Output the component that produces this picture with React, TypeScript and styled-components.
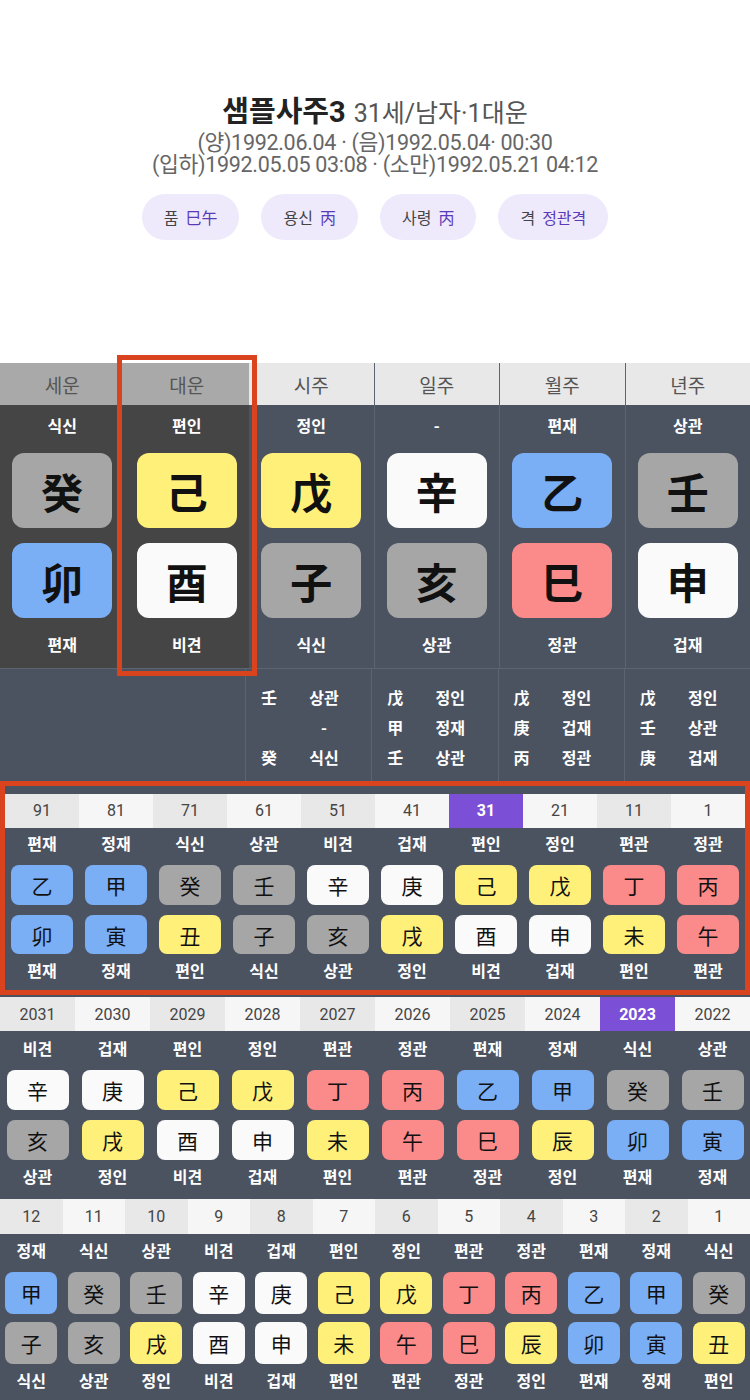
import React from "react";
import styled, { createGlobalStyle } from "styled-components";

const Global = createGlobalStyle`
  body { margin: 0; background: #fff; font-family: Roboto, "Noto Sans CJK KR", sans-serif; }
`;

const COLORS: Record<string, string> = {
  甲: "#7aaef5", 乙: "#7aaef5", 寅: "#7aaef5", 卯: "#7aaef5",
  丙: "#fb8a8a", 丁: "#fb8a8a", 巳: "#fb8a8a", 午: "#fb8a8a",
  戊: "#fff07a", 己: "#fff07a", 辰: "#fff07a", 戌: "#fff07a", 丑: "#fff07a", 未: "#fff07a",
  庚: "#fafafa", 辛: "#fafafa", 申: "#fafafa", 酉: "#fafafa",
  壬: "#a6a6a6", 癸: "#a6a6a6", 亥: "#a6a6a6", 子: "#a6a6a6",
};

const Header = styled.div`
  padding-top: 94px; height: 363px; box-sizing: border-box;
  display: flex; flex-direction: column; align-items: center;
`;
const Title = styled.div`
  display: flex; align-items: baseline; gap: 8px; color: #222; line-height: 36px;
`;
const Name = styled.span`font-size: 29px; font-weight: 700;`;
const Sub = styled.span`font-size: 25px; color: #555;`;
const Line = styled.div`font-size: 21.5px; color: #666; line-height: 22px; letter-spacing: -0.3px;`;
const Pills = styled.div`display: flex; gap: 22px; margin-top: 18px;`;
const Pill = styled.div`
  height: 46px; padding: 0 22px; border-radius: 23px; background: #eeeafc;
  display: flex; align-items: center; gap: 7px; font-size: 16px; color: #444;
  font-family: "Noto Sans CJK KR", sans-serif;
`;
const PillVal = styled.span`color: #5a3ab8;`;

const Table = styled.div`display: flex; background: #4b5361;`;
const Col = styled.div<{ $dark?: boolean; $boxed?: boolean; $div?: boolean }>`
  flex: 1; display: flex; flex-direction: column; align-items: center;
  background: ${(p) => (p.$dark ? "#454545" : "#4b5361")};
  border-left: ${(p) => (p.$div ? "1px solid #5c6472" : "none")};
  position: relative; z-index: ${(p) => (p.$boxed ? 2 : 1)};
  outline: ${(p) => (p.$boxed ? "5px solid #d9441f" : "none")};
  outline-offset: ${(p) => (p.$boxed ? "3px" : "0")};
  height: 305px;
`;
const ColHead = styled.div<{ $dark?: boolean }>`
  align-self: stretch; height: 42px; display: flex; align-items: center; justify-content: center;
  background: ${(p) => (p.$dark ? "#a9a9a9" : "#e8e8e8")};
  color: #555; font-size: 19px; font-family: "Noto Sans CJK KR", sans-serif;
`;
const Label = styled.div<{ $h?: number; $pb?: number }>`
  color: #fff; font-weight: 700; font-size: 16px;
  height: ${(p) => p.$h ?? 42}px; padding-bottom: ${(p) => p.$pb ?? 0}px; box-sizing: border-box;
  display: flex; align-items: center; justify-content: center;
  font-family: "Noto Sans CJK KR", sans-serif;
`;
const BigCard = styled.div<{ $bg: string }>`
  width: 100px; height: 75px; border-radius: 12px; background: ${(p) => p.$bg};
  display: flex; align-items: center; justify-content: center; margin-bottom: 15px;
  font-size: 42px; font-weight: 700; color: #111; font-family: "Noto Sans CJK KR", sans-serif;
`;
const Hidden = styled.div`
  display: grid; grid-template-columns: 245px repeat(4, 1fr); background: #4b5361;
  height: 112px; border-top: 1px solid #5c6472;
`;
const HCol = styled.div`
  border-left: 1px solid #5c6472; display: flex; flex-direction: column; justify-content: center;
  padding-top: 4px;
  &:first-child { border-left: none; }
`;
const HRow = styled.div`
  display: grid; grid-template-columns: 46px 64px; height: 30px; align-items: center;
  color: #fff; font-weight: 700; font-size: 16px; font-family: "Noto Sans CJK KR", sans-serif;
  text-align: center;
`;

const Section = styled.div<{ $boxed?: boolean; $h: number; $pt: number }>`
  background: #4b5361; height: ${(p) => p.$h}px; box-sizing: border-box;
  border: ${(p) => (p.$boxed ? "5px solid #d9441f" : "none")};
  padding-top: ${(p) => p.$pt}px;
  display: flex;
`;
const SCol = styled.div`flex: 1; display: flex; flex-direction: column; align-items: center;`;
const Num = styled.div<{ $alt: boolean; $active: boolean; $h: number }>`
  align-self: stretch; height: ${(p) => p.$h}px; display: flex; align-items: center; justify-content: center;
  background: ${(p) => (p.$active ? "#7b4fd6" : p.$alt ? "#e8e8e8" : "#f6f6f6")};
  color: ${(p) => (p.$active ? "#fff" : "#444")}; font-weight: ${(p) => (p.$active ? 700 : 400)};
  font-size: 16px;
`;
const SmallCard = styled.div<{ $bg: string; $w: number; $h: number; $mb: number }>`
  width: ${(p) => p.$w}px; height: ${(p) => p.$h}px; border-radius: 8px; background: ${(p) => p.$bg};
  display: flex; align-items: center; justify-content: center; margin-bottom: ${(p) => p.$mb}px;
  font-size: 21px; color: #111; font-family: "Noto Sans CJK KR", sans-serif;
`;

type Item = { n: string; t: string; s: string; b: string; bt: string; active?: boolean };

const daewoon: Item[] = [
  ["91","편재","乙","卯","편재"],["81","정재","甲","寅","정재"],["71","식신","癸","丑","편인"],
  ["61","상관","壬","子","식신"],["51","비견","辛","亥","상관"],["41","겁재","庚","戌","정인"],
  ["31","편인","己","酉","비견"],["21","정인","戊","申","겁재"],["11","편관","丁","未","편인"],["1","정관","丙","午","편관"],
].map(([n,t,s,b,bt]) => ({ n, t, s, b, bt, active: n === "31" }));

const years: Item[] = [
  ["2031","비견","辛","亥","상관"],["2030","겁재","庚","戌","정인"],["2029","편인","己","酉","비견"],
  ["2028","정인","戊","申","겁재"],["2027","편관","丁","未","편인"],["2026","정관","丙","午","편관"],
  ["2025","편재","乙","巳","정관"],["2024","정재","甲","辰","정인"],["2023","식신","癸","卯","편재"],["2022","상관","壬","寅","정재"],
].map(([n,t,s,b,bt]) => ({ n, t, s, b, bt, active: n === "2023" }));

const months: Item[] = [
  ["12","정재","甲","子","식신"],["11","식신","癸","亥","상관"],["10","상관","壬","戌","정인"],
  ["9","비견","辛","酉","비견"],["8","겁재","庚","申","겁재"],["7","편인","己","未","편인"],
  ["6","정인","戊","午","편관"],["5","편관","丁","巳","정관"],["4","정관","丙","辰","정인"],
  ["3","편재","乙","卯","편재"],["2","정재","甲","寅","정재"],["1","식신","癸","丑","편인"],
].map(([n,t,s,b,bt]) => ({ n, t, s, b, bt }));

const pillars = [
  { h: "세운", t: "식신", s: "癸", b: "卯", bt: "편재", dark: true },
  { h: "대운", t: "편인", s: "己", b: "酉", bt: "비견", dark: true, boxed: true },
  { h: "시주", t: "정인", s: "戊", b: "子", bt: "식신" },
  { h: "일주", t: "-", s: "辛", b: "亥", bt: "상관" },
  { h: "월주", t: "편재", s: "乙", b: "巳", bt: "정관" },
  { h: "년주", t: "상관", s: "壬", b: "申", bt: "겁재" },
];

const hidden = [
  [["壬","상관"],["","-"],["癸","식신"]],
  [["戊","정인"],["甲","정재"],["壬","상관"]],
  [["戊","정인"],["庚","겁재"],["丙","정관"]],
  [["戊","정인"],["壬","상관"],["庚","겁재"]],
];

type StripProps = { items: Item[]; h: number; pt: number; boxed?: boolean; numH: number; cw: number; ch: number; gap: number; mb: number };

function Strip({ items, h, pt, boxed, numH, cw, ch, gap, mb }: StripProps) {
  return (
    <Section $boxed={boxed} $h={h} $pt={pt}>
      {items.map((it, i) => (
        <SCol key={it.n}>
          <Num $alt={i % 2 === 0} $active={!!it.active} $h={numH}>{it.n}</Num>
          <Label $h={gap} $pb={6}>{it.t}</Label>
          <SmallCard $bg={COLORS[it.s]} $w={cw} $h={ch} $mb={mb}>{it.s}</SmallCard>
          <SmallCard $bg={COLORS[it.b]} $w={cw} $h={ch} $mb={0}>{it.b}</SmallCard>
          <Label $h={36} $pb={4}>{it.bt}</Label>
        </SCol>
      ))}
    </Section>
  );
}

export default function App() {
  return (
    <>
      <Global />
      <Header>
        <Title><Name>샘플사주3</Name><Sub>31세/남자·1대운</Sub></Title>
        <Line>(양)1992.06.04 · (음)1992.05.04· 00:30</Line>
        <Line>(입하)1992.05.05 03:08 · (소만)1992.05.21 04:12</Line>
        <Pills>
          <Pill>품 <PillVal>巳午</PillVal></Pill>
          <Pill>용신 <PillVal>丙</PillVal></Pill>
          <Pill>사령 <PillVal>丙</PillVal></Pill>
          <Pill>격 <PillVal>정관격</PillVal></Pill>
        </Pills>
      </Header>
      <Table>
        {pillars.map((p, i) => (
          <Col key={p.h} $dark={p.dark} $boxed={p.boxed} $div={i > 2}>
            <ColHead $dark={p.dark}>{p.h}</ColHead>
            <Label $h={48} $pb={8}>{p.t}</Label>
            <BigCard $bg={COLORS[p.s]}>{p.s}</BigCard>
            <BigCard $bg={COLORS[p.b]}>{p.b}</BigCard>
            <Label $h={22}>{p.bt}</Label>
          </Col>
        ))}
      </Table>
      <Hidden>
        <HCol />
        {hidden.map((c, i) => (
          <HCol key={i}>
            {c.map((r, j) => (
              <HRow key={j}><span>{r[0]}</span><span>{r[1]}</span></HRow>
            ))}
          </HCol>
        ))}
      </Hidden>
      <Strip items={daewoon} h={214} pt={8} boxed numH={34} cw={62} ch={40} gap={38} mb={10} />
      <Strip items={years} h={204} pt={2} numH={34} cw={62} ch={40} gap={39} mb={10} />
      <Strip items={months} h={210} pt={0} numH={35} cw={52} ch={42} gap={38} mb={8} />
    </>
  );
}
